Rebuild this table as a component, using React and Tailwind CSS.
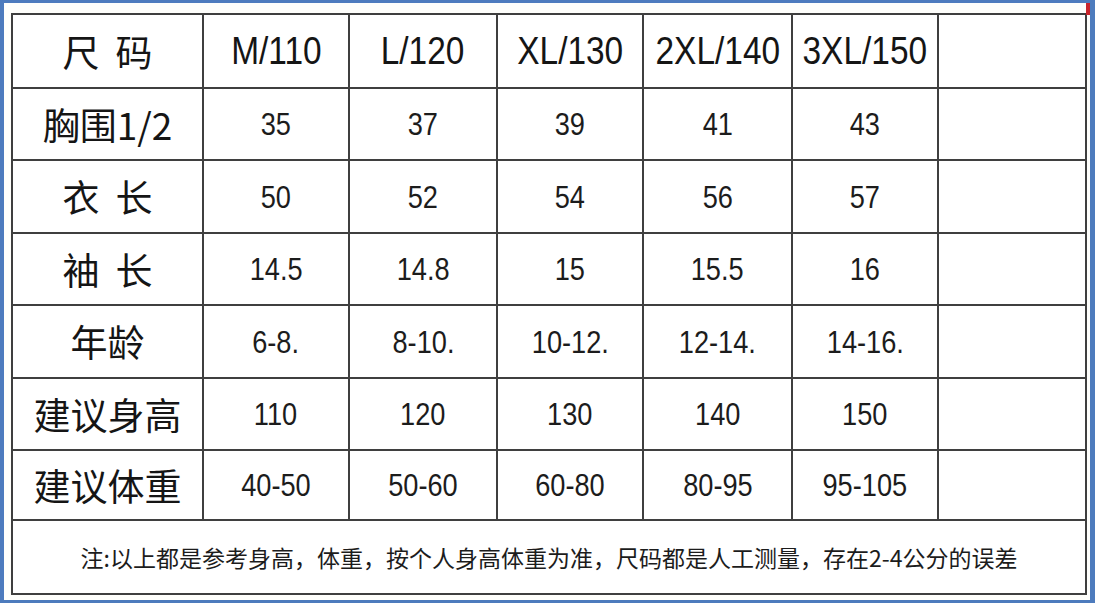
import React from "react";

const cols = ["w-[189px]", "w-[144px]", "w-[146px]", "w-[144px]", "w-[147px]", "w-[144px]", "w-[146px]"];

const header = ["M/110", "L/120", "XL/130", "2XL/140", "3XL/150"];

const rows = [
  { label: ["胸围1/2"], h: "h-[70px]", values: ["35", "37", "39", "41", "43"] },
  { label: ["衣", "长"], h: "h-[71px]", values: ["50", "52", "54", "56", "57"] },
  { label: ["袖", "长"], h: "h-[70px]", values: ["14.5", "14.8", "15", "15.5", "16"] },
  { label: ["年龄"], h: "h-[71px]", values: ["6-8.", "8-10.", "10-12.", "12-14.", "14-16."] },
  { label: ["建议身高"], h: "h-[70px]", values: ["110", "120", "130", "140", "150"] },
  { label: ["建议体重"], h: "h-[68px]", values: ["40-50", "50-60", "60-80", "80-95", "95-105"] },
];

const cjk = { fontFamily: '"Noto Sans CJK SC", "Noto Sans", sans-serif' };
const latin = { fontFamily: '"Liberation Sans", Arial, sans-serif' };

const Label = ({ parts }) => (
  <div className="flex items-center justify-center gap-[16px] text-[37px] leading-none text-[#151515]" style={cjk}>
    {parts.map((p, i) => (
      <span key={i}>{p}</span>
    ))}
  </div>
);

export default function App() {
  return (
    <div className="w-[1095px] h-[606px] bg-white">
      <div className="relative h-[603px] border-t-[3px] border-l-4 border-r-[5px] border-b-[3px] border-[#4d7bbd] bg-[#fefefb] pt-[10px] pl-[7px]">
        {/* red corner mark */}
        <div className="absolute top-0 right-0 w-[4px] h-[12px] bg-[#c8242b]" />

        <div className="inline-flex flex-col gap-[2px] bg-[#3f3f3f] p-[2px]">
          {/* header row */}
          <div className="flex gap-[2px] h-[72px]">
            <div className={`${cols[0]} bg-white flex items-center justify-center`}>
              <Label parts={["尺", "码"]} />
            </div>
            {header.map((h, i) => (
              <div key={h} className={`${cols[i + 1]} bg-white flex items-center justify-center`}>
                <span className="inline-block text-[38px] leading-none text-[#151515] scale-x-[0.88]" style={latin}>
                  {h}
                </span>
              </div>
            ))}
            <div className={`${cols[6]} bg-white`} />
          </div>

          {rows.map((r, ri) => (
            <div key={ri} className={`flex gap-[2px] ${r.h}`}>
              <div className={`${cols[0]} bg-white flex items-center justify-center`}>
                <Label parts={r.label} />
              </div>
              {r.values.map((v, i) => (
                <div key={i} className={`${cols[i + 1]} bg-white flex items-center justify-center`}>
                  <span className="inline-block text-[32px] leading-none text-[#1c1c1c] scale-x-[0.85]" style={latin}>
                    {v}
                  </span>
                </div>
              ))}
              <div className={`${cols[6]} bg-white`} />
            </div>
          ))}

          {/* note row */}
          <div className="h-[72px] bg-white flex items-center justify-center">
            <span className="text-[23px] leading-none text-[#1c1c1c]" style={cjk}>
              注:以上都是参考身高，体重，按个人身高体重为准，尺码都是人工测量，存在2-4公分的误差
            </span>
          </div>
        </div>
      </div>
    </div>
  );
}
